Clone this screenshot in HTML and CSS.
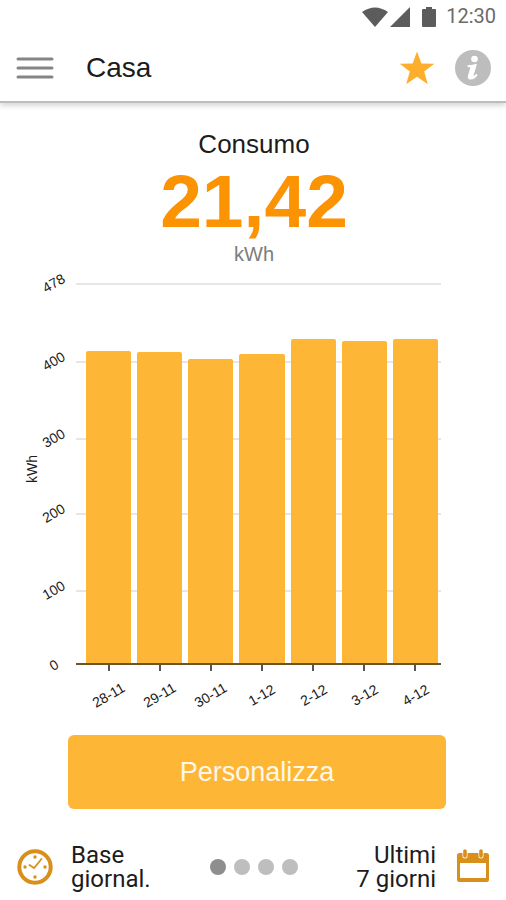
FILE: index.html
```html
<!DOCTYPE html>
<html lang="it">
<head>
<meta charset="utf-8">
<meta name="viewport" content="width=device-width, initial-scale=1">
<title>Casa</title>
<link rel="stylesheet" href="styles.css">
</head>
<body>
<header class="top">
  <div class="status">
    <svg width="26" height="20" viewBox="0 0 26 20" aria-hidden="true"><path d="M0 5Q13-4 26 5L13 20Z"/></svg>
    <svg width="20" height="20" viewBox="0 0 20 20" aria-hidden="true"><path d="M20 0V20H0Z"/></svg>
    <svg class="battery" width="14" height="20" viewBox="0 0 14 20" aria-hidden="true"><path d="M4 0h6v2h3q1 0 1 1v16q0 1-1 1H1q-1 0-1-1V3q0-1 1-1h3Z"/></svg>
    <span class="time">12:30</span>
  </div>
  <div class="toolbar">
    <button class="icon-button" type="button" aria-label="Menu">
      <svg width="38" height="22" viewBox="0 0 38 22"><path d="M2 2H36M2 11H36M2 20H36" stroke="#858585" stroke-width="3" stroke-linecap="round"/></svg>
    </button>
    <h1 class="title">Casa</h1>
    <button class="icon-button" type="button" aria-label="Preferiti">
      <svg width="36" height="34" viewBox="0 0 36 34"><path d="M18 0.5L22.4 12.4L35.3 12.8L25.2 20.6L28.8 33.2L18 25.8L7.2 33.2L10.8 20.6L0.7 12.8L13.6 12.4Z" fill="#fdae2c"/></svg>
    </button>
    <button class="icon-button" type="button" aria-label="Informazioni">
      <svg width="36" height="36" viewBox="0 0 36 36"><circle cx="18" cy="18" r="18" fill="#bdbdbd"/><circle cx="19.500" cy="9" r="3.300" fill="#fff"/><path d="M12.500 15.200Q17.500 15 22 13.800L18.800 24.800Q18.500 26.400 19.600 25.600L21.500 23.800L22.700 24.900Q19.500 29.400 15.600 29.400Q12 29.200 12.900 25.900L15.200 17.800Q15.400 16.900 12.500 16.900Z" fill="#fff"/></svg>
    </button>
  </div>
</header>

<main class="content">
  <section class="summary">
    <h2 class="summary-title">Consumo</h2>
    <p class="summary-value">21,42</p>
    <p class="summary-unit">kWh</p>
  </section>

  <section class="chart" aria-label="Consumo giornaliero">
    <div class="axis-name"><span>kWh</span></div>
    <div class="scale">
      <span>478</span><span>400</span><span>300</span><span>200</span><span>100</span><span>0</span>
    </div>
    <div class="lines"><i></i><i></i><i></i><i></i><i></i></div>
    <div class="bars">
      <div class="bar" style="height:82.1%"></div>
      <div class="bar" style="height:81.8%"></div>
      <div class="bar" style="height:80%"></div>
      <div class="bar" style="height:81.4%"></div>
      <div class="bar" style="height:85.2%"></div>
      <div class="bar" style="height:84.7%"></div>
      <div class="bar" style="height:85.2%"></div>
    </div>
    <div class="days">
      <span>28-11</span><span>29-11</span><span>30-11</span><span>1-12</span><span>2-12</span><span>3-12</span><span>4-12</span>
    </div>
  </section>

  <button class="customize" type="button">Personalizza</button>
</main>

<footer class="bottom">
  <button class="option" type="button">
    <svg width="36" height="36" viewBox="0 0 36 36" aria-hidden="true"><circle cx="18" cy="18" r="15.700" fill="#fff" stroke="#d98f1c" stroke-width="4"/><g fill="#d98f1c"><circle cx="18" cy="8" r="1.700"/><circle cx="18" cy="28" r="1.700"/><circle cx="8" cy="18" r="1.700"/><circle cx="28" cy="18" r="1.700"/></g><path d="M12.500 16L17 19L24.500 10" fill="none" stroke="#d98f1c" stroke-width="1.800" stroke-linecap="round"/></svg>
    <span>Base<br>giornal.</span>
  </button>
  <div class="pages"><i class="current"></i><i></i><i></i><i></i></div>
  <button class="option option-end" type="button">
    <span>Ultimi<br>7 giorni</span>
    <svg width="34" height="36" viewBox="0 0 34 36" aria-hidden="true"><rect x="1" y="4" width="32" height="29" rx="2.500" fill="#d98f1c"/><path d="M4 14H30V29H4Z" fill="#fff"/><path d="M9 1V7M25 1V7" stroke="#fff" stroke-width="5" stroke-linecap="round"/><path d="M9 2V7M25 2V7" stroke="#d98f1c" stroke-width="3.600" stroke-linecap="round"/></svg>
  </button>
</footer>
</body>
</html>
```
FILE: styles.css
```css
* {
  box-sizing: border-box;
}

body {
  margin: 0;
  min-height: 100vh;
  display: flex;
  flex-direction: column;
  background: #fff;
  color: #1c1c1c;
  font-family: "Liberation Sans", Arial, sans-serif;
}

h1, h2, p {
  margin: 0;
  font-weight: 400;
}

button {
  border: 0;
  padding: 0;
  background: none;
  color: inherit;
  font: inherit;
  cursor: pointer;
}

svg {
  display: block;
}

/* Header */
.top {
  border-bottom: 2px solid #bdbdbd;
  box-shadow: 0 2px 6px rgba(0, 0, 0, 0.2);
}

.status {
  display: flex;
  align-items: center;
  justify-content: flex-end;
  gap: 2px;
  height: 34px;
  padding: 0 10px 0 0;
  fill: #5c5c5c;
}

.battery {
  margin: 0 8px 0 10px;
}

.time {
  color: #6b6b6b;
  font: 20px/32px Roboto, sans-serif;
  height: 34px;
}

.toolbar {
  display: flex;
  align-items: center;
  height: 67px;
  gap: 20px;
  padding: 0 15px 0 16px;
}

.title {
  flex: 1;
  padding-left: 12px;
  font-size: 28px;
  line-height: 32px;
}

/* Reading */
.content {
  flex: 1;
}

.summary {
  padding: 25px 0 0 2px;
  text-align: center;
}

.summary-title {
  font-size: 26px;
  line-height: 32px;
}

.summary-value {
  color: #fb9302;
  font-size: 75px;
  font-weight: 700;
  line-height: 82px;
}

.summary-unit {
  color: #7c7c7c;
  font-size: 20px;
  line-height: 24px;
}

/* Chart */
.chart {
  display: grid;
  grid-template-columns: 16px 36px 1fr;
  grid-template-rows: 382px 70px;
  margin: 17px 65px 0 24px;
  font-size: 14px;
  line-height: 16px;
}

.axis-name {
  display: grid;
  place-content: center;
  padding-bottom: 10px;
}

.axis-name span {
  transform: rotate(-90deg);
}

.scale,
.lines {
  display: grid;
  grid-template-rows: 78fr 76fr 75fr 76fr 75fr;
}

.scale {
  grid-auto-rows: 0;
  justify-items: center;
  padding-right: 8px;
}

.scale span {
  height: 16px;
  margin-top: -8px;
  transform: rotate(-30deg);
}

.lines {
  grid-area: 1 / 3;
}

.lines i {
  border-top: 2px solid #e6e6e6;
}

.bars {
  grid-area: 1 / 3;
  z-index: 1;
  display: flex;
  align-items: flex-end;
  gap: 6px;
  padding: 0 3px 0 10px;
  border-bottom: 2px solid #6e5528;
}

.bar {
  flex: 1;
  background: #feb636;
  border-radius: 2px 2px 0 0;
}

.days {
  grid-area: 2 / 3;
  display: flex;
  gap: 6px;
  padding: 0 3px 0 10px;
  background: repeating-linear-gradient(90deg, #555 0 2px, transparent 2px 51px) 32px 0 / 309px 6px no-repeat;
}

.days span {
  flex: 1;
  display: grid;
  place-items: center;
  align-content: center;
  height: 60px;
  transform: rotate(-30deg);
}

.customize {
  display: block;
  width: calc(100% - 128px);
  height: 74px;
  margin: 0 60px 0 68px;
  border-radius: 6px;
  background: #feb636;
  color: #fff8e8;
  font-size: 27px;
}

/* Footer */
.bottom {
  display: grid;
  grid-template-columns: 1fr auto 1fr;
  align-items: center;
  padding: 0 16px 9px 17px;
  font: 24px/24px Roboto, sans-serif;
}

.option {
  display: flex;
  align-items: center;
  gap: 18px;
  text-align: left;
}

.option-end {
  justify-self: end;
  gap: 20px;
  text-align: right;
}

.pages {
  display: flex;
  gap: 8px;
}

.pages i {
  width: 16px;
  height: 16px;
  border-radius: 50%;
  background: #bebebe;
}

.pages .current {
  background: #8e8e8e;
}
```
